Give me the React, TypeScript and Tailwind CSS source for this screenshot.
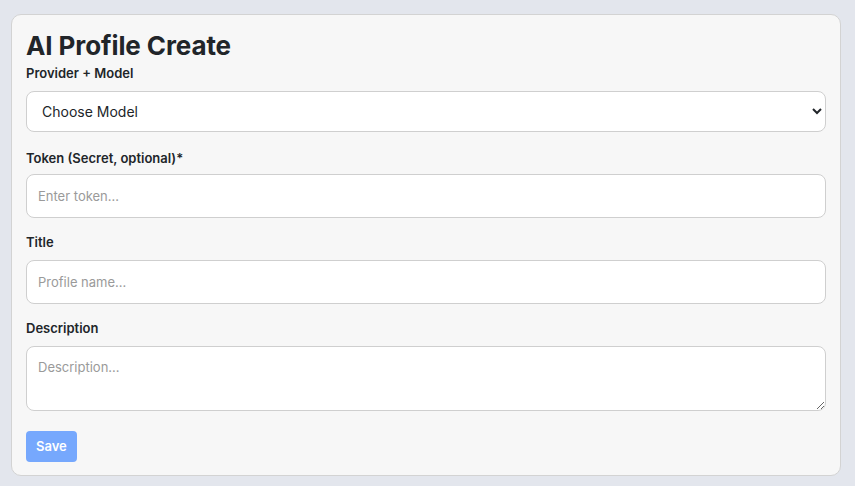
import React, { useState } from 'react';

const App: React.FC = () => {
    const [model, setModel] = useState('');
    const [token, setToken] = useState('');
    const [title, setTitle] = useState('');
    const [description, setDescription] = useState('');

    const canSave = model !== '' && title.trim() !== '';

    return (
        <div className="min-h-screen bg-[#e3e6ed] pl-[11px] pr-[14px] pt-[14px] pb-[10px] font-['Inter',sans-serif] text-[#212529]">
            <div className="bg-[#f7f7f7] border border-[#d3d3d3] rounded-[10px] px-[14px] pt-[14px] pb-[13px]">
                <h1 className="text-[26px] leading-[34px] font-bold tracking-[-0.1px]">AI Profile Create</h1>

                <form onSubmit={(e) => e.preventDefault()} className="flex flex-col">
                    <label className="text-[13px] font-semibold leading-[20px]">Provider + Model</label>
                    <select
                        value={model}
                        onChange={(e) => setModel(e.target.value)}
                        className="mt-[8px] h-[41px] w-full bg-white border border-[#cfcfcf] rounded-[8px] px-[11px] text-[14px] text-[#212529]"
                    >
                        <option value="">Choose Model</option>
                        <option value="openai:gpt-4o">OpenAI / gpt-4o</option>
                        <option value="anthropic:claude">Anthropic / claude</option>
                    </select>

                    <label className="text-[13px] font-semibold leading-[20px] mt-[16px]">Token (Secret, optional)*</label>
                    <input
                        type="password"
                        value={token}
                        onChange={(e) => setToken(e.target.value)}
                        placeholder="Enter token..."
                        className="mt-[6px] h-[44px] w-full bg-white border border-[#cfcfcf] rounded-[8px] px-[11px] text-[13px] placeholder:text-[#9a9a9a] outline-none"
                    />

                    <label className="text-[13px] font-semibold leading-[20px] mt-[14px]">Title</label>
                    <input
                        type="text"
                        value={title}
                        onChange={(e) => setTitle(e.target.value)}
                        placeholder="Profile name..."
                        className="mt-[8px] h-[44px] w-full bg-white border border-[#cfcfcf] rounded-[8px] px-[11px] text-[13px] placeholder:text-[#9a9a9a] outline-none"
                    />

                    <label className="text-[13px] font-semibold leading-[20px] mt-[14px]">Description</label>
                    <textarea
                        value={description}
                        onChange={(e) => setDescription(e.target.value)}
                        placeholder="Description..."
                        className="mt-[8px] h-[65px] w-full bg-white border border-[#cfcfcf] rounded-[8px] px-[11px] py-[11px] text-[13px] leading-[19px] placeholder:text-[#9a9a9a] outline-none"
                    />

                    <div className="mt-[20px]">
                        <button
                            type="submit"
                            disabled={!canSave}
                            className="h-[31px] px-[10px] rounded-[4px] bg-[#0d6efd] disabled:bg-[#76a8fd] text-white text-[13px] font-semibold"
                        >
                            Save
                        </button>
                    </div>
                </form>
            </div>
        </div>
    );
};

export default App;
